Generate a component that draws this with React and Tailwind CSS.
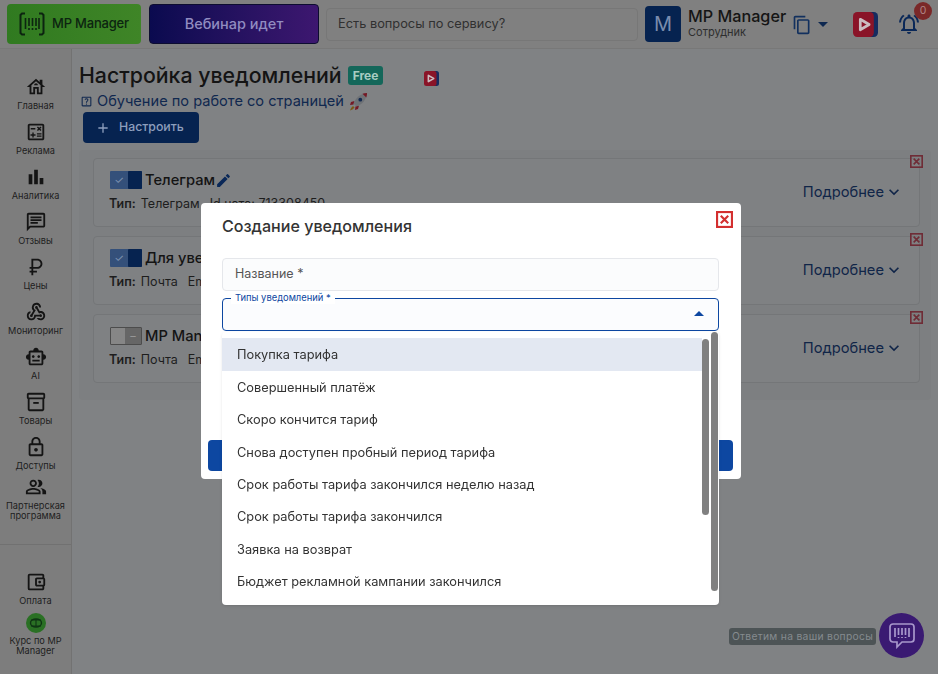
import React from "react";
import {
  MdAdd,
  MdBarChart,
  MdContentCopy,
  MdEdit,
  MdExpandMore,
  MdOutlineAccountBalanceWallet,
  MdOutlineCalculate,
  MdOutlineChat,
  MdOutlineCurrencyRuble,
  MdOutlineHelpCenter,
  MdOutlineHouse,
  MdOutlineInventory2,
  MdOutlineLock,
  MdOutlineNotificationsActive,
  MdOutlinePeopleAlt,
  MdOutlineSmartToy,
  MdOutlineWebhook,
} from "react-icons/md";

const navItems = [
  { label: "Главная", Icon: MdOutlineHouse },
  { label: "Реклама", Icon: MdOutlineCalculate },
  { label: "Аналитика", Icon: MdBarChart },
  { label: "Отзывы", Icon: MdOutlineChat },
  { label: "Цены", Icon: MdOutlineCurrencyRuble },
  { label: "Мониторинг", Icon: MdOutlineWebhook },
  { label: "AI", Icon: MdOutlineSmartToy },
  { label: "Товары", Icon: MdOutlineInventory2 },
  { label: "Доступы", Icon: MdOutlineLock },
];

const cards = [
  { title: "Телеграм", type: "Телеграм", extra: "Id чата: 713308450", on: true, edit: true },
  { title: "Для уведомлений", type: "Почта", extra: "Email", on: true },
  { title: "MP Manager", type: "Почта", extra: "Email", on: false },
];

const options = [
  "Покупка тарифа",
  "Совершенный платёж",
  "Скоро кончится тариф",
  "Снова доступен пробный период тарифа",
  "Срок работы тарифа закончился неделю назад",
  "Срок работы тарифа закончился",
  "Заявка на возврат",
  "Бюджет рекламной кампании закончился",
];

function BarcodeLogo() {
  return (
    <svg width="26" height="24" viewBox="0 0 26 24" fill="none" stroke="#0c2410" strokeWidth="2">
      <path d="M6 1.500H3L1.500 3v18L3 22.500h3M20 1.500h3L24.500 3v18L23 22.500h-3" />
      <path d="M6.500 6v11M10 6v8M10 16v2M13.500 6v8M13.500 16v2M17 6v8M17 16v2M20 6v11" strokeWidth="1.600" />
    </svg>
  );
}

function VideoIcon({ size = 24 }) {
  return (
    <svg width={size} height={size} viewBox="0 0 24 24">
      <rect x="4" y="0" width="20" height="24" rx="4" fill="#162c60" />
      <rect x="0" y="0" width="20" height="24" rx="4" fill="#8a1428" />
      <path d="M7 7 15.500 12 7 17Z" fill="none" stroke="#cbbcc0" strokeWidth="2.600" strokeLinejoin="round" />
    </svg>
  );
}

function CloseBox({ className, color }) {
  return (
    <svg className={className} viewBox="0 0 16 16" fill="none" stroke={color} strokeWidth="2">
      <rect x="1" y="1" width="14" height="14" />
      <path d="M4.500 4.500 11.500 11.500M11.500 4.500 4.500 11.500" strokeWidth="2" />
    </svg>
  );
}

function Rocket() {
  return (
    <svg width="19" height="19" viewBox="0 0 19 19">
      <path d="M4 14c-1.500 1-2.500 3-3 4.500 1.500-.5 3.500-1.500 4.500-3z" fill="#7a5a16" />
      <path d="M5.500 9 2 10l-1 3 3.500-.5zM10 13.500 9 17l-3 1 .5-3.500z" fill="#751824" />
      <path d="M4.500 11.500C6.500 6 11 1.800 18 1c-.6 7-5 11.500-10.500 13.500z" fill="#6e7276" />
      <path d="M13.500 1.700 17.300 5.500C17.800 4 18 2.500 18 1c-1.600.1-3.100.3-4.500.7z" fill="#751824" />
      <circle cx="11.300" cy="7.700" r="1.900" fill="#142a50" />
    </svg>
  );
}

function ChatIcon() {
  return (
    <svg width="28" height="27" viewBox="0 0 28 27" fill="none" stroke="#a898cc" strokeWidth="1.700">
      <path d="M5 2h18a3 3 0 0 1 3 3v12a3 3 0 0 1-3 3H14l-5 5v-5H5a3 3 0 0 1-3-3V5a3 3 0 0 1 3-3Z" />
      <path d="M7 6v9M10.500 6v7M10.500 15v1M14 6v7M14 15v1M17.500 6v7M17.500 15v1M21 6v9" />
    </svg>
  );
}

function CourseBadge() {
  return (
    <svg width="20" height="20" viewBox="0 0 20 20">
      <circle cx="10" cy="10" r="10" fill="#2a7024" />
      <ellipse cx="10" cy="10" rx="5.500" ry="4" fill="none" stroke="#0f3514" strokeWidth="1.400" />
      <path d="M5 7h10M5 13h10M10 6v8" stroke="#0f3514" strokeWidth="1.100" />
    </svg>
  );
}

function Toggle({ on }) {
  if (on) {
    return (
      <div className="flex h-[18px] w-8 shrink-0 rounded-[1px] bg-[#34507a]">
        <span className="flex w-[18px] items-center justify-center text-[11px] leading-none text-[#7d92b2]">✓</span>
        <span className="h-[18px] w-[14px] rounded-[1px] bg-[#062350]" />
      </div>
    );
  }
  return (
    <div className="flex h-[18px] w-8 shrink-0 rounded-[1px] border border-[#4c4c4c] bg-[#666666]">
      <span className="h-full w-[14px] bg-[#868686]" />
      <span className="flex flex-1 items-center justify-center text-[11px] leading-none text-[#989898]">–</span>
    </div>
  );
}

function Sidebar() {
  return (
    <aside className="flex h-full w-[72px] shrink-0 flex-col items-stretch border-r border-[#727272] bg-[#7d7d7d] pt-[27px]">
      {navItems.map(({ label, Icon }) => (
        <div key={label} className="flex h-[45px] flex-col items-center text-center">
          <Icon className="text-[22px] text-[#141414]" />
          <span className="mt-[2px] text-[9.200px] leading-3 text-[#1d1d1d]">{label}</span>
        </div>
      ))}
      <div className="flex flex-col items-center text-center">
        <MdOutlinePeopleAlt className="-mt-[5px] text-[22px] text-[#141414]" />
        <span className="mt-[3px] text-[9.200px] leading-[10px] text-[#1d1d1d]">
          Партнерская
          <br />
          программа
        </span>
      </div>
      <div className="mt-[23px] border-t border-[#717171]" />
      <div className="mt-[26px] flex flex-col items-center text-center">
        <MdOutlineAccountBalanceWallet className="text-[22px] text-[#141414]" />
        <span className="mt-[2px] text-[9.200px] leading-3 text-[#1d1d1d]">Оплата</span>
      </div>
      <div className="mt-[6px] flex flex-col items-center text-center">
        <CourseBadge />
        <span className="mt-[3px] text-[9.200px] leading-[10px] text-[#1d1d1d]">
          Курс по MP
          <br />
          Manager
        </span>
      </div>
    </aside>
  );
}

function Header() {
  return (
    <header className="flex h-[49px] shrink-0 items-center border-b border-[#787878] bg-[#808080] pl-[7px]">
      <div className="flex h-10 w-[134px] items-center gap-[7px] rounded bg-linear-to-r from-[#307a20] to-[#3f8527] pl-[12px]">
        <BarcodeLogo />
        <span className="text-[13px] font-medium tracking-[-0.2px] text-[#0c2410]">MP Manager</span>
      </div>
      <div className="ml-2 flex h-10 w-[170px] items-center justify-center rounded border border-[#0d0d30] bg-linear-to-r from-[#0a0a4f] to-[#3d1770] text-[14.500px] font-medium text-[#918cc0]">
        Вебинар идет
      </div>
      <div className="ml-[7px] flex h-[33px] w-[312px] items-center rounded-sm border border-[#777777] bg-[#808080] pl-[11px] text-[12.800px] text-[#303030]">
        Есть вопросы по сервису?
      </div>
      <div className="ml-[7px] flex h-9 w-9 items-center justify-center rounded-sm bg-[#062350] text-[20px] text-[#7a8cad]">M</div>
      <div className="mb-[3px] ml-[7px] flex flex-col">
        <span className="text-[16.200px] leading-[18px] text-[#151515] font-medium">MP Manager</span>
        <span className="text-[11px] leading-[14px] text-[#2e2e2e]">Сотрудник</span>
      </div>
      <MdContentCopy className="ml-[6px] mt-[2px] text-[20px] text-[#12305e]" />
      <span className="ml-[6px] h-0 w-0 border-x-[5px] border-t-[5px] border-x-transparent border-t-[#0e2850]" />
      <span className="ml-[25px] flex">
        <VideoIcon size={25} />
      </span>
      <span className="relative ml-[19px] flex">
        <MdOutlineNotificationsActive className="text-[24px] text-[#0a2858]" />
        <span className="absolute -right-[11px] -top-[10px] flex h-[18px] w-[18px] items-center justify-center rounded-full bg-[#7a2828] text-[10.500px] text-[#b08585]">
          0
        </span>
      </span>
    </header>
  );
}

function Content() {
  return (
    <main className="flex-1 bg-[#808284] pl-[7px] pt-[12px]">
      <div className="flex items-center">
        <h1 className="text-[21.300px] font-medium leading-[28px] text-[#141414]">Настройка уведомлений</h1>
        <span className="ml-[6px] rounded-[3px] bg-[#14675a] px-[5px] py-[1px] text-[12px] font-bold leading-[17px] text-[#a8ccc2]">Free</span>
        <span className="ml-[41px] mt-[6px] flex">
          <VideoIcon size={15} />
        </span>
      </div>
      <div className="mt-[2px] flex h-5 items-center text-[#10284f]">
        <MdOutlineHelpCenter className="ml-[1px] text-[13px]" />
        <span className="ml-[4px] text-[14.600px] leading-5">Обучение по работе со страницей</span>
        <span className="ml-[5px] flex">
          <Rocket />
        </span>
      </div>
      <button className="ml-[4px] mt-[1px] flex h-[31px] w-[116px] items-center rounded bg-[#062350] pl-[12px] text-[12.300px] font-medium text-[#8d9ebd]">
        <MdAdd className="text-[16px]" />
        <span className="ml-[8px]">Настроить</span>
      </button>

      <section className="mt-[7px] h-[250px] w-[852px] rounded-sm bg-[#7d7f81] pl-[14px] pr-[11px] pt-[8px]">
        {cards.map((card) => (
          <div key={card.title} className="relative mb-[9px] h-[69px] rounded-sm border border-[#747678] bg-[#7f8183] pl-[15px] pt-[11px]">
            <div className="flex h-[20px] items-center">
              <span className="ml-[1px]">
                <Toggle on={card.on} />
              </span>
              <span className="ml-[3px] text-[14.700px] font-medium text-[#141414]">{card.title}</span>
              {card.edit && <MdEdit className="text-[17px] text-[#0a2858]" />}
            </div>
            <div className="mt-[6px] flex text-[12.500px] leading-4 text-[#1d1d1d]">
              <b className="font-semibold">Тип:</b>
              <span className="ml-[5px]">{card.type}</span>
              <span className="ml-[10px]">{card.extra}</span>
            </div>
            <div className="absolute right-[15px] top-[22px] flex items-center text-[14.700px] text-[#102548]">
              Подробнее
              <MdExpandMore className="text-[20px]" />
            </div>
            <CloseBox className="absolute -right-[4px] -top-[4px] h-[13px] w-[13px]" color="#6f2c36" />
          </div>
        ))}
      </section>
    </main>
  );
}

function Modal() {
  return (
    <div className="fixed inset-0">
      <div className="fixed left-[201px] top-[203px] h-[276px] w-[540px] rounded-sm bg-white pl-[21px] pr-[22px] pt-[14px]">
        <h2 className="text-[16.100px] font-medium leading-[19px] text-[#333]">Создание уведомления</h2>
        <CloseBox className="absolute right-[8px] top-[8px] h-[17px] w-[17px]" color="#d32f2f" />
        <div className="mt-[22px] flex h-[33px] items-center rounded-sm border border-gray-200 bg-[#fbfcfd] pl-3 text-[12.500px] text-[#555]">
          Название *
        </div>
        <div className="relative mt-[7px] h-[33px] rounded-sm border border-[#0d47a1] bg-[#fbfcfe]">
          <span className="absolute -top-[7px] left-[8px] bg-white px-[4px] text-[9.400px] leading-3 text-[#0d47a1]">Типы уведомлений *</span>
          <span className="absolute right-[14px] top-[12px] h-0 w-0 border-x-[5px] border-b-[5px] border-x-transparent border-b-[#0d47a1]" />
        </div>
        <button className="absolute left-[7px] top-[237px] h-[31px] w-[525px] rounded-sm bg-[#0d47a1]" />

        <div className="absolute left-[21px] top-[129px] h-[273px] w-[497px] rounded-sm bg-white pt-[6.400px] shadow-sm">
          {options.map((option, index) => (
            <div
              key={option}
              className={`flex h-[32.400px] w-[480px] items-center pl-[15px] text-[12.800px] text-[#333] ${index === 0 ? "bg-[#e3e8f2]" : ""}`}
            >
              <span className="mt-[1px]">{option}</span>
            </div>
          ))}
          <span className="absolute right-[10px] top-[7px] h-[176px] w-[7px] rounded bg-[#808080]" />
          <span className="absolute right-px top-0 h-[259px] w-[7px] rounded bg-[#808080]" />
        </div>
      </div>

      <div className="fixed bottom-[29px] left-[729px] flex h-[17px] w-[147px] items-center justify-center rounded-[3px] bg-[#4d5456] text-[10.300px] tracking-[0.3px] text-[#858b8f]">
        Ответим на ваши вопросы
      </div>
      <div className="fixed bottom-[16px] left-[879px] flex h-[45px] w-[45px] items-center justify-center rounded-full bg-[#3a1a72]">
        <ChatIcon />
      </div>
    </div>
  );
}

export default function App() {
  return (
    <div className="flex h-screen w-full flex-col overflow-hidden font-['Inter',sans-serif]">
      <Header />
      <div className="flex min-h-0 flex-1">
        <Sidebar />
        <Content />
      </div>
      <Modal />
    </div>
  );
}
